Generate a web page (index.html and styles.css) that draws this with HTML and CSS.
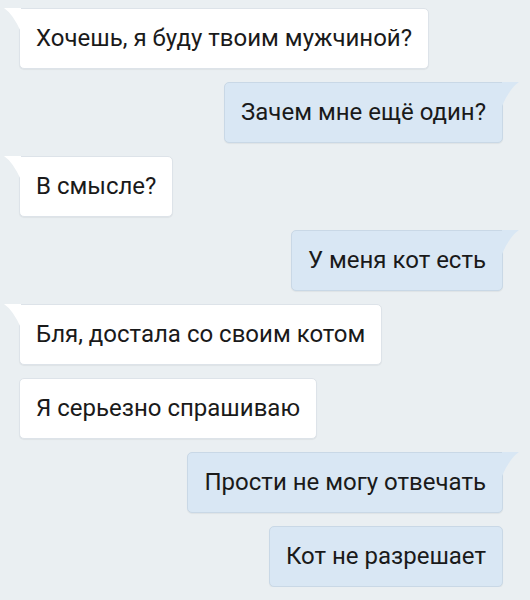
FILE: index.html
```html
<!DOCTYPE html>
<html lang="ru">
<head>
<meta charset="UTF-8">
<meta name="viewport" content="width=device-width, initial-scale=1.0">
<title>Чат</title>
<link rel="stylesheet" href="styles.css">
</head>
<body>
<div class="chat">
  <div class="msg in tail">Хочешь, я буду твоим мужчиной?</div>
  <div class="msg out tail">Зачем мне ещё один?</div>
  <div class="msg in tail">В смысле?</div>
  <div class="msg out tail">У меня кот есть</div>
  <div class="msg in tail">Бля, достала со своим котом</div>
  <div class="msg in">Я серьезно спрашиваю</div>
  <div class="msg out tail">Прости не могу отвечать</div>
  <div class="msg out">Кот не разрешает</div>
</div>
</body>
</html>
```

FILE: styles.css
```css
body {
  margin: 0;
  background: #eaeff2;
  font-family: Roboto, "Liberation Sans", sans-serif;
  color: #1a1a1a;
}
.chat {
  display: flex;
  flex-direction: column;
  gap: 13px;
  padding: 8px 27px 0 19px;
}
.msg {
  position: relative;
  box-sizing: border-box;
  height: 61px;
  line-height: 59px;
  padding: 0 16px 0 16px;
  font-size: 24px;
  border-radius: 5px;
  border: 1px solid #dde3e9;
  box-shadow: 0 1px 1px rgba(0, 0, 0, 0.05);
  white-space: nowrap;
}
.msg.in {
  align-self: flex-start;
  background: #ffffff;
}
.msg.out {
  align-self: flex-end;
  background: #d9e7f4;
  border-color: #c9d8e6;
}
.msg.tail::before {
  content: "";
  position: absolute;
  top: -1px;
  width: 17px;
  height: 24px;
}
.msg.in.tail {
  border-top-left-radius: 0;
}
.msg.in.tail::before {
  left: -16px;
  background: #ffffff;
  clip-path: path("M0,0 L17,0 L17,24 Q9,6 0,0 Z");
}
.msg.out.tail {
  border-top-right-radius: 0;
}
.msg.out.tail::before {
  right: -17px;
  background: #d9e7f4;
  clip-path: path("M17,0 L0,0 L0,24 Q8,6 17,0 Z");
}
```
